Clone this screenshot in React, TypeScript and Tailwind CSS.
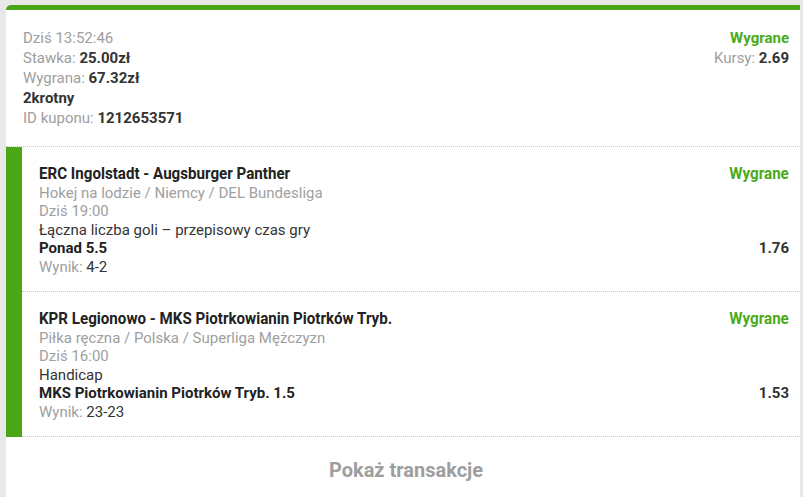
import React from 'react';

interface Bet {
  match: string;
  league: string;
  time: string;
  market: string;
  pick: string;
  odds: string;
  score: string;
}

const bets: Bet[] = [
  {
    match: 'ERC Ingolstadt - Augsburger Panther',
    league: 'Hokej na lodzie / Niemcy / DEL Bundesliga',
    time: 'Dziś 19:00',
    market: 'Łączna liczba goli – przepisowy czas gry',
    pick: 'Ponad 5.5',
    odds: '1.76',
    score: '4-2',
  },
  {
    match: 'KPR Legionowo - MKS Piotrkowianin Piotrków Tryb.',
    league: 'Piłka ręczna / Polska / Superliga Mężczyzn',
    time: 'Dziś 16:00',
    market: 'Handicap',
    pick: 'MKS Piotrkowianin Piotrków Tryb. 1.5',
    odds: '1.53',
    score: '23-23',
  },
];

function BetRow({ bet }: { bet: Bet }) {
  return (
    <div className="flex">
      <div className="w-[16px] shrink-0 bg-[#4aa616]" />
      <div className="flex-1 flex justify-between pl-[17px] pr-[11px] pt-[16px] pb-[15px] border-b border-dotted border-[#c8c8c8]">
        <div className="text-[15px] leading-[18.4px] text-[#333]">
          <div className="text-[17px] leading-[21px] font-bold text-[#222] origin-left scale-x-[0.89] whitespace-nowrap">
            {bet.match}
          </div>
          <div className="text-[#a0a0a0]">{bet.league}</div>
          <div className="text-[#a0a0a0]">{bet.time}</div>
          <div>{bet.market}</div>
          <div className="font-bold text-[#222]">{bet.pick}</div>
          <div>
            <span className="text-[#a0a0a0]">Wynik: </span>
            {bet.score}
          </div>
        </div>
        <div className="flex flex-col items-end text-[15px] leading-[18.4px]">
          <div className="text-[17px] leading-[21px] font-bold text-[#4aab1a] origin-right scale-x-[0.89]">Wygrane</div>
          <div className="h-[55.2px]" />
          <div className="font-bold text-[#333]">{bet.odds}</div>
        </div>
      </div>
    </div>
  );
}

export default function App() {
  return (
    <div className="w-[803px] h-[497px] overflow-hidden bg-[#e8e8e8] pt-[5px] pl-[6px] pr-[3px]" style={{ fontFamily: 'Roboto, "Noto Sans", sans-serif' }}>
      <div className="h-full bg-white border-t-[5px] border-[#4aa616] rounded-tl-[5px]">
        {/* nagłówek kuponu */}
        <div className="flex justify-between pl-[17px] pr-[11px] pt-[18px] pb-[18px] border-b border-dotted border-[#c8c8c8] text-[15px] leading-[20px]">
          <div className="text-[#9e9e9e]">
            <div>Dziś 13:52:46</div>
            <div>Stawka: <span className="font-bold text-[#333]">25.00zł</span></div>
            <div>Wygrana: <span className="font-bold text-[#333]">67.32zł</span></div>
            <div className="font-bold text-[#333]">2krotny</div>
            <div>ID kuponu: <span className="font-bold text-[#333]">1212653571</span></div>
          </div>
          <div className="text-right">
            <div className="font-bold text-[#4aab1a]">Wygrane</div>
            <div className="text-[#9e9e9e]">Kursy: <span className="font-bold text-[#333]">2.69</span></div>
          </div>
        </div>

        {bets.map((bet) => (
          <BetRow key={bet.match} bet={bet} />
        ))}

        <div className="flex justify-center pt-[21px] pl-[6px]">
          <button className="text-[20px] leading-[24px] font-bold text-[#9e9e9e]">Pokaż transakcje</button>
        </div>
      </div>
    </div>
  );
}
